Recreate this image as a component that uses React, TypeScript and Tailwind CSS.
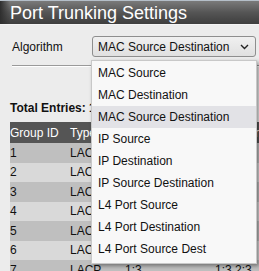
import React from "react";

const options = [
  "MAC Source",
  "MAC Destination",
  "MAC Source Destination",
  "IP Source",
  "IP Destination",
  "IP Source Destination",
  "L4 Port Source",
  "L4 Port Destination",
  "L4 Port Source Dest",
];

const rows = [
  { id: "1", type: "LACP", a: "1:3", b: "1:3,2:3" },
  { id: "2", type: "LACP", a: "1:3", b: "1:3,2:3" },
  { id: "3", type: "LACP", a: "1:3", b: "1:3,2:3" },
  { id: "4", type: "LACP", a: "1:3", b: "1:3,2:3" },
  { id: "5", type: "LACP", a: "1:3", b: "1:3,2:3" },
  { id: "6", type: "LACP", a: "1:3", b: "1:3,2:3" },
  { id: "7", type: "LACP", a: "1:3", b: "1:3,2:3" },
];

export default function App() {
  const selected = "MAC Source Destination";

  return (
    <div className="relative w-[259px] h-[271px] overflow-hidden bg-[#ececec] font-['Liberation_Sans',Arial,sans-serif] text-[12px] text-[#111]">
      {/* Title bar */}
      <div className="h-[25px] border-t border-[#b4bec8] border-b border-b-[#f4f4f4] bg-gradient-to-b from-[#7a7a7a] via-[#555] to-[#3e3e3e] flex items-stretch">
        <div className="w-[10px] shrink-0 bg-gradient-to-r from-[#2e2e2e] to-transparent" />
        <span className="self-center text-[18px] leading-none text-white">Port Trunking Settings</span>
      </div>

      <div className="pl-[10px]">
        {/* Algorithm row */}
        <div className="flex items-center mt-[11px] h-[21px]">
          <span className="w-[82px] shrink-0 pl-[2px]">Algorithm</span>
          <div className="flex shrink-0 items-center justify-between w-[164px] h-[21px] rounded-[3px] border border-[#8e8e8e] bg-gradient-to-b from-[#f0f0f0] to-[#e0e0e0] pl-[5px] pr-[6px]">
            <span>{selected}</span>
            <svg width="9" height="6" viewBox="0 0 9 6" className="mt-[1px]">
              <path d="M1 1 L4.5 4.5 L8 1" fill="none" stroke="#222" strokeWidth="1.4" />
            </svg>
          </div>
        </div>

        {/* Divider */}
        <div className="mt-[8px] ml-[2px] h-[2px] border-t border-[#9a9a9a] border-b border-b-white" />

        {/* Total entries */}
        <div className="mt-[32px] font-bold">Total Entries: 1</div>

        {/* Table */}
        <div className="mt-[5px]">
          <div className="flex items-center h-[21px] bg-[#555] text-white whitespace-nowrap">
            <span className="w-[60px] shrink-0">Group ID</span>
            <span className="w-[55px] shrink-0">Type</span>
            <span className="w-[90px] shrink-0">Master Port</span>
            <span className="shrink-0">Member Ports</span>
          </div>
          {rows.map((r, i) => (
            <div
              key={r.id}
              className={`flex items-center h-[19.5px] whitespace-nowrap ${i % 2 === 0 ? "bg-[#bfbfbf]" : "bg-[#d9d9d9]"}`}
            >
              <span className="w-[60px] shrink-0">{r.id}</span>
              <span className="w-[55px] shrink-0">{r.type}</span>
              <span className="w-[90px] shrink-0">{r.a}</span>
              <span className="shrink-0">{r.b}</span>
            </div>
          ))}
        </div>
      </div>

      {/* Open dropdown list */}
      <div className="absolute left-[91px] top-[60px] w-[166px] bg-[#f8f8f8] border border-[#c8c8c8] shadow-[2px_2px_4px_rgba(0,0,0,0.4)] pt-[1px] pb-[3px]">
        {options.map((o) => (
          <div
            key={o}
            className={`h-[22px] flex items-center pl-[6px] ${o === selected ? "bg-[#e2e2e6]" : ""}`}
          >
            {o}
          </div>
        ))}
      </div>
    </div>
  );
}
